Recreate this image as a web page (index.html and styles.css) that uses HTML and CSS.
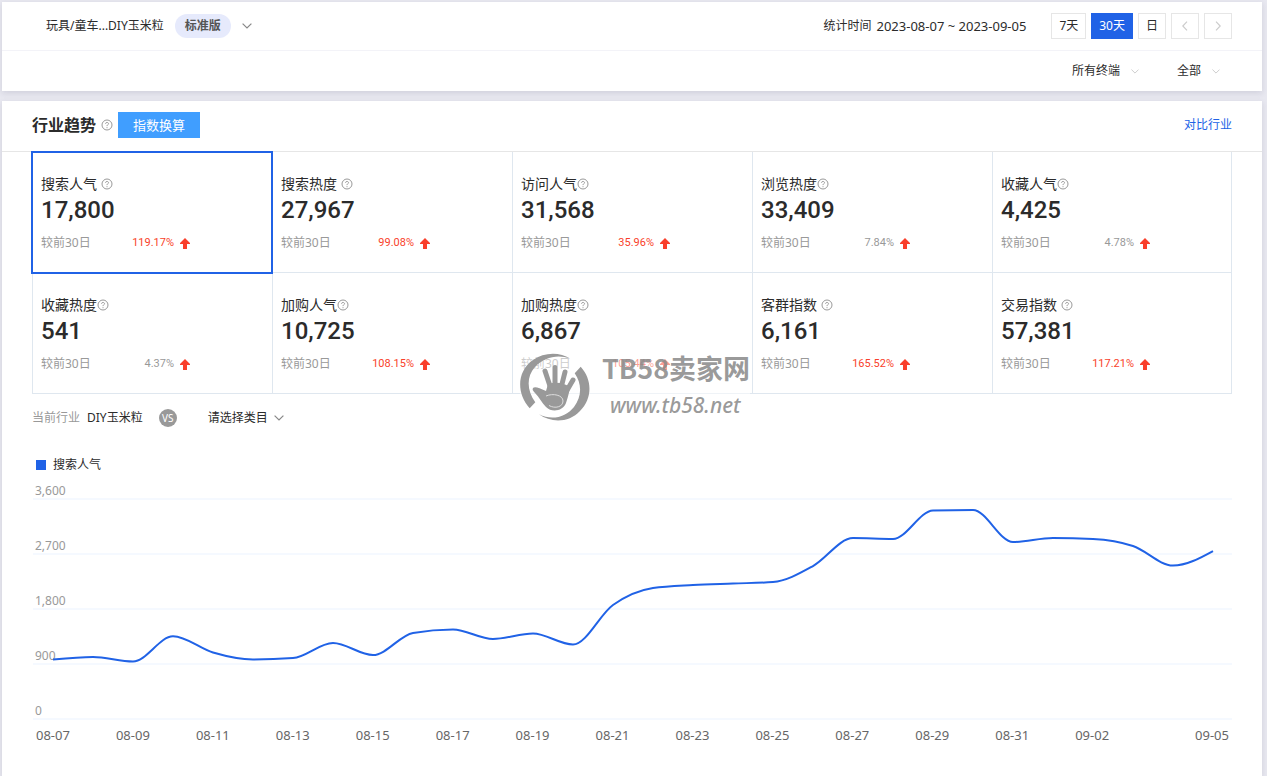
FILE: index.html
```
<!DOCTYPE html>
<html lang="zh-CN">
<head>
    <meta charset="UTF-8">
    <title>行业趋势</title>
    <link rel="stylesheet" href="styles.css">
</head>
<body>
    <svg class="sprite" aria-hidden="true">
        <symbol id="icon-help" viewBox="0 0 12 12">
            <circle cx="6" cy="6" r="5" fill="none" stroke="currentColor"/>
            <path d="M4.5 4.8C4.5 3 7.6 3 7.5 4.8C7.4 5.8 6 5.8 6 7.1M6 8.2V9.2" fill="none" stroke="currentColor"/>
        </symbol>
        <symbol id="icon-down" viewBox="0 0 10 6">
            <path d="M.6.6L5 5L9.4.6" fill="none" stroke="currentColor" stroke-width="1.2"/>
        </symbol>
        <symbol id="icon-up" viewBox="0 0 10 11">
            <path d="M5 0L10 5V6H7V11H3V6H0V5Z" fill="currentColor"/>
        </symbol>
    </svg>

    <header class="panel topbar">
        <div class="topbar-row">
            <button class="category" type="button">
                <span>玩具/童车...DIY玉米粒</span>
                <span class="badge">标准版</span>
                <svg class="icon-down"><use href="#icon-down"/></svg>
            </button>
            <div class="date-filter">
                <span>统计时间</span>
                <span class="date-range">2023-08-07 ~ 2023-09-05</span>
                <button class="date-button" type="button">7天</button>
                <button class="date-button active" type="button">30天</button>
                <button class="date-button" type="button">日</button>
                <button class="date-button" type="button" aria-label="上一页" disabled>
                    <svg width="6" height="10" viewBox="0 0 6 10"><path d="M5 .7L.8 5L5 9.3" fill="none" stroke="currentColor" stroke-width="1.2"/></svg>
                </button>
                <button class="date-button" type="button" aria-label="下一页" disabled>
                    <svg width="6" height="10" viewBox="0 0 6 10"><path d="M1 .7L5.2 5L1 9.3" fill="none" stroke="currentColor" stroke-width="1.2"/></svg>
                </button>
            </div>
        </div>
        <div class="topbar-row filters">
            <button class="dropdown" type="button">所有终端 <svg class="icon-down"><use href="#icon-down"/></svg></button>
            <button class="dropdown" type="button">全部 <svg class="icon-down"><use href="#icon-down"/></svg></button>
        </div>
    </header>

    <main class="panel trend">
        <div class="trend-header">
            <h1>行业趋势</h1>
            <svg class="icon-help"><use href="#icon-help"/></svg>
            <button class="convert-button" type="button">指数换算</button>
            <a class="compare-link" href="#">对比行业</a>
        </div>

        <div class="metrics">
            <button class="metric active" type="button">
                <span class="metric-title spaced">搜索人气<svg class="icon-help"><use href="#icon-help"/></svg></span>
                <span class="metric-value">17,800</span>
                <span class="metric-change"><span>较前30日</span><span class="percent high">119.17%</span><svg class="icon-up"><use href="#icon-up"/></svg></span>
            </button>
            <button class="metric" type="button">
                <span class="metric-title spaced">搜索热度<svg class="icon-help"><use href="#icon-help"/></svg></span>
                <span class="metric-value">27,967</span>
                <span class="metric-change"><span>较前30日</span><span class="percent high">99.08%</span><svg class="icon-up"><use href="#icon-up"/></svg></span>
            </button>
            <button class="metric" type="button">
                <span class="metric-title">访问人气<svg class="icon-help"><use href="#icon-help"/></svg></span>
                <span class="metric-value">31,568</span>
                <span class="metric-change"><span>较前30日</span><span class="percent high">35.96%</span><svg class="icon-up"><use href="#icon-up"/></svg></span>
            </button>
            <button class="metric" type="button">
                <span class="metric-title">浏览热度<svg class="icon-help"><use href="#icon-help"/></svg></span>
                <span class="metric-value">33,409</span>
                <span class="metric-change"><span>较前30日</span><span class="percent">7.84%</span><svg class="icon-up"><use href="#icon-up"/></svg></span>
            </button>
            <button class="metric" type="button">
                <span class="metric-title">收藏人气<svg class="icon-help"><use href="#icon-help"/></svg></span>
                <span class="metric-value">4,425</span>
                <span class="metric-change"><span>较前30日</span><span class="percent">4.78%</span><svg class="icon-up"><use href="#icon-up"/></svg></span>
            </button>
            <button class="metric" type="button">
                <span class="metric-title">收藏热度<svg class="icon-help"><use href="#icon-help"/></svg></span>
                <span class="metric-value">541</span>
                <span class="metric-change"><span>较前30日</span><span class="percent">4.37%</span><svg class="icon-up"><use href="#icon-up"/></svg></span>
            </button>
            <button class="metric" type="button">
                <span class="metric-title">加购人气<svg class="icon-help"><use href="#icon-help"/></svg></span>
                <span class="metric-value">10,725</span>
                <span class="metric-change"><span>较前30日</span><span class="percent high">108.15%</span><svg class="icon-up"><use href="#icon-up"/></svg></span>
            </button>
            <button class="metric" type="button">
                <span class="metric-title">加购热度<svg class="icon-help"><use href="#icon-help"/></svg></span>
                <span class="metric-value">6,867</span>
                <span class="metric-change"><span>较前30日</span><span class="percent high">105.44%</span><svg class="icon-up"><use href="#icon-up"/></svg></span>
            </button>
            <button class="metric" type="button">
                <span class="metric-title spaced">客群指数<svg class="icon-help"><use href="#icon-help"/></svg></span>
                <span class="metric-value">6,161</span>
                <span class="metric-change"><span>较前30日</span><span class="percent high">165.52%</span><svg class="icon-up"><use href="#icon-up"/></svg></span>
            </button>
            <button class="metric" type="button">
                <span class="metric-title spaced">交易指数<svg class="icon-help"><use href="#icon-help"/></svg></span>
                <span class="metric-value">57,381</span>
                <span class="metric-change"><span>较前30日</span><span class="percent high">117.21%</span><svg class="icon-up"><use href="#icon-up"/></svg></span>
            </button>

            <div class="watermark">
                <svg class="watermark-logo" viewBox="0 0 70 70">
                    <g fill="#999">
                        <path d="M9.7 55.3C-4 40-3 18 13 7C24-1 40-1 50 5.5C38 1 24 4 15 14C6 24 7 38 15.3 49.3Z"/>
                        <path d="M60.7 13.7C72 26 73 45 60 58C49 70 31 70 19 61.3C32 68 46 64 54 54C62 43 62 31 54.7 20.3Z"/>
                        <path d="M13 35C15 33 19 35 26 38L28 31C35 29 42 29 50 34C49 40 48 44 46 50C43 58 32 60 26 54C22 50 19 44 15 40C13 38 12 36.500 13 35Z"/>
                    </g>
                    <g stroke="#999" stroke-linecap="round" stroke-width="5" fill="none">
                        <path d="M25 18L31 36M35 14.500V34M45 19L41 35M53 27L46 39"/>
                    </g>
                    <path d="M26 43C33 40 43 42 43 48C43 54 35 56 29 52.500" fill="none" stroke="#ddd"/>
                </svg>
                <div class="watermark-text">
                    <span class="watermark-name">TB58卖家网</span>
                    <span class="watermark-url">www.tb58.net</span>
                </div>
            </div>
        </div>

        <div class="compare">
            <span class="compare-label">当前行业</span>
            <span>DIY玉米粒</span>
            <span class="vs">VS</span>
            <button class="dropdown dark" type="button">请选择类目 <svg class="icon-down"><use href="#icon-down"/></svg></button>
        </div>

        <div class="legend">搜索人气</div>

        <div class="chart">
            <div class="y-axis">
                <span>3,600</span>
                <span>2,700</span>
                <span>1,800</span>
                <span>900</span>
                <span>0</span>
            </div>
            <svg class="chart-line" viewBox="0 0 1200 220" preserveAspectRatio="none">
                <path id="trendLine" vector-effect="non-scaling-stroke"/>
            </svg>
        </div>
        <div class="x-axis" id="xAxis"></div>
    </main>

    <script src="script.js"></script>
</body>
</html>
```
FILE: styles.css
```
* {
    margin: 0;
    padding: 0;
    box-sizing: border-box;
}

body {
    background-color: #e8e8f0;
    color: #2b2b2b;
    font-family: "Noto Sans", "Noto Sans CJK SC", sans-serif;
    font-size: 12px;
    line-height: 16px;
    padding: 2px 5px 0 2px;
    display: flex;
    flex-direction: column;
    gap: 10px;
    min-height: 100vh;
}

button {
    font: inherit;
    color: inherit;
    background: none;
    border: none;
    cursor: pointer;
}

.sprite {
    display: none;
}

.panel {
    background-color: white;
    box-shadow: 0 2px 6px rgba(60, 60, 90, 0.14);
}

.topbar-row {
    display: flex;
    align-items: center;
    justify-content: space-between;
    height: 48px;
    padding: 0 30px 0 44px;
}

.topbar-row.filters {
    height: 41px;
    border-top: 1px solid #f3f3f8;
    justify-content: flex-end;
    gap: 38px;
    padding-right: 42px;
}

.category {
    display: flex;
    align-items: center;
    gap: 11px;
}

.badge {
    background-color: #e6eafc;
    color: #555;
    font-weight: bold;
    line-height: 24px;
    padding: 0 10px;
    border-radius: 12px;
}

.icon-down {
    width: 10px;
    height: 6px;
    color: #888;
}

.filters .icon-down {
    width: 8px;
    height: 5px;
    color: #ccc;
}

.icon-help {
    width: 12px;
    height: 12px;
    color: #999;
}

.icon-up {
    width: 10px;
    height: 11px;
    color: #f93f2b;
    margin-left: 6px;
}

.date-filter {
    display: flex;
    align-items: center;
    gap: 5px;
}

.date-range {
    font-size: 13px;
    margin-right: 20px;
}

.date-button {
    display: flex;
    align-items: center;
    justify-content: center;
    height: 26px;
    min-width: 28px;
    padding: 0 7px;
    border: 1px solid #e6e6e6;
}

.date-button.active {
    background-color: #2062e6;
    border-color: #2062e6;
    color: white;
}

.date-button:disabled {
    color: #ccc;
}

.dropdown {
    display: flex;
    align-items: center;
    gap: 11px;
}

.dropdown.dark {
    gap: 6px;
}

.trend {
    flex: 1;
}

.trend-header {
    display: flex;
    align-items: center;
    gap: 5px;
    height: 51px;
    padding: 0 30px 2px;
    border-bottom: 1px solid #e6e6e6;
}

.trend-header h1 {
    font-size: 16px;
    line-height: 24px;
}

.convert-button {
    background-color: #409eff;
    color: white;
    font-size: 13px;
    height: 26px;
    padding: 0 15px;
}

.compare-link {
    color: #2062e6;
    text-decoration: none;
    margin-left: auto;
}

.metrics {
    position: relative;
    display: grid;
    grid-template-columns: repeat(5, 1fr);
    margin: 0 30px;
}

.metric {
    display: flex;
    flex-direction: column;
    text-align: left;
    height: 121px;
    padding: 23px 8px 0;
    border-left: 1px solid #dfe7ef;
    border-bottom: 1px solid #dfe7ef;
}

.metric:nth-child(5n) {
    border-right: 1px solid #dfe7ef;
}

.metric.active {
    outline: 2px solid #2062e6;
    outline-offset: -1px;
    border-color: transparent;
    z-index: 1;
}

.metric-title {
    display: flex;
    align-items: center;
    font-size: 14px;
    line-height: 18px;
}

.metric-title.spaced {
    gap: 4px;
}

.metric-value {
    font-family: Roboto, sans-serif;
    font-size: 24px;
    font-weight: 500;
    line-height: 34px;
}

.metric-change {
    display: flex;
    align-items: center;
    width: 149px;
    color: #999;
    margin-top: 8px;
}

.percent {
    font-family: Roboto, sans-serif;
    font-size: 11px;
    margin-left: auto;
}

.percent.high {
    color: #f93f2b;
}

.watermark {
    position: absolute;
    left: 488px;
    top: 201px;
    z-index: 2;
    display: flex;
    gap: 12px;
    background-color: rgba(255, 255, 255, 0.5);
    pointer-events: none;
}

.watermark-logo {
    width: 70px;
    height: 70px;
}

.watermark-text {
    display: flex;
    flex-direction: column;
    color: rgba(136, 136, 136, 0.85);
}

.watermark-name {
    font-family: "Noto Sans CJK SC", sans-serif;
    font-size: 27px;
    font-weight: bold;
    line-height: 30px;
}

.watermark-url {
    font-size: 21px;
    font-style: italic;
    font-weight: 500;
    line-height: 40px;
    padding-left: 8px;
    margin-top: 2px;
}

.compare {
    display: flex;
    align-items: center;
    height: 48px;
    padding: 0 30px;
}

.compare-label {
    color: #999;
    margin-right: 7px;
}

.vs {
    width: 18px;
    height: 18px;
    margin: 0 31px 0 16px;
    border-radius: 50%;
    background-color: #999;
    color: white;
    font-size: 10px;
    line-height: 18px;
    text-align: center;
}

.legend {
    display: flex;
    align-items: center;
    gap: 7px;
    margin: 15px 34px 0;
}

.legend::before {
    content: "";
    width: 10px;
    height: 10px;
    background-color: #2062e6;
}

.chart {
    position: relative;
    margin: 10px 30px 0;
    color: #999;
}

.y-axis span {
    display: block;
    height: 55px;
    line-height: 15px;
    padding-left: 3px;
}

.y-axis span::after {
    content: "";
    display: block;
    border-top: 2px solid #f5f9ff;
    margin-left: -2px;
}

.y-axis span:last-child {
    height: 17px;
}

.chart-line {
    position: absolute;
    left: 0;
    top: 16px;
    width: 100%;
    height: 220px;
    overflow: visible;
}

.chart-line path {
    fill: none;
    stroke: #2062e6;
    stroke-width: 2;
}

.x-axis {
    display: grid;
    grid-template-columns: repeat(30, 1fr);
    margin: 7px 30px 0;
    padding-left: 1px;
    color: #666;
}

.x-axis span {
    font-size: 13px;
    text-align: center;
    white-space: nowrap;
}
```
FILE: script.js
```
const days = [
    '08-07', '08-08', '08-09', '08-10', '08-11', '08-12', '08-13', '08-14', '08-15', '08-16',
    '08-17', '08-18', '08-19', '08-20', '08-21', '08-22', '08-23', '08-24', '08-25', '08-26',
    '08-27', '08-28', '08-29', '08-30', '08-31', '09-01', '09-02', '09-03', '09-04', '09-05'
];
const values = [
    974, 1015, 941, 1353, 1088, 974, 998, 1244, 1047, 1407,
    1464, 1309, 1399, 1219, 1865, 2143, 2192, 2217, 2241, 2503,
    2961, 2945, 3411, 3419, 2896, 2961, 2945, 2830, 2511, 2749
];

const step = 40;
const points = values.map((value, i) => [21 + i * step, 220 - value / 3600 * 220]);

// Slope at each point, kept monotone so the curve never overshoots the data
const slopes = points.map((p, i) => {
    if (i === 0 || i === points.length - 1) return null;
    const before = (p[1] - points[i - 1][1]) / step;
    const after = (points[i + 1][1] - p[1]) / step;
    if (before * after <= 0) return 0;
    return Math.sign(before) * Math.min(Math.abs(before), Math.abs(after), Math.abs(before + after) / 4) * 2;
});
const last = points.length - 1;
slopes[0] = (3 * (points[1][1] - points[0][1]) / step - slopes[1]) / 2;
slopes[last] = (3 * (points[last][1] - points[last - 1][1]) / step - slopes[last - 1]) / 2;

let d = `M${points[0]}`;
for (let i = 1; i < points.length; i++) {
    const [x0, y0] = points[i - 1];
    const [x1, y1] = points[i];
    const third = step / 3;
    d += `C${x0 + third},${y0 + slopes[i - 1] * third} ${x1 - third},${y1 - slopes[i] * third} ${x1},${y1}`;
}
document.getElementById('trendLine').setAttribute('d', d);

// Every second day gets a label, and the last day always has one
const xAxis = document.getElementById('xAxis');
days.forEach((day, i) => {
    const label = document.createElement('span');
    if (i === last || (i % 2 === 0 && i < last - 1)) label.textContent = day;
    xAxis.appendChild(label);
});
```
